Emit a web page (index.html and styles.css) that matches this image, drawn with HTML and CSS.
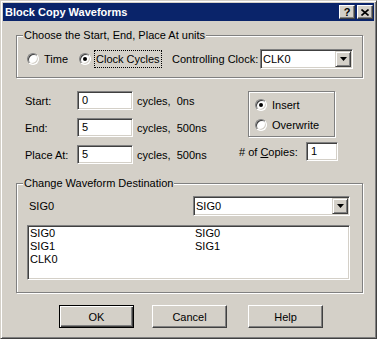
FILE: index.html
```html
<!DOCTYPE html>
<html lang="en">
<head>
  <meta charset="UTF-8">
  <title>Block Copy Waveforms</title>
  <link rel="stylesheet" href="styles.css">
</head>
<body>
  <div class="window">
    <div class="titlebar">
      <span class="title">Block Copy Waveforms</span>
      <div class="title-buttons">
        <span class="tbtn help">?</span>
        <span class="tbtn">
          <svg width="8" height="7" viewBox="0 0 8 7"><path d="M0.5 0.5 L7.5 6.5 M7.5 0.5 L0.5 6.5" stroke="#000" stroke-width="1.6"/></svg>
        </span>
      </div>
    </div>

    <div class="content">
      <fieldset class="group">
        <legend>Choose the Start, End, Place At units</legend>
        <div class="units-row">
          <div class="radio-item time-item"><span class="radio"></span><span class="radio-label">Time</span></div>
          <div class="radio-item clock-item"><span class="radio on"></span><span class="radio-label focus">Clock Cycles</span></div>
          <span class="clock-label">Controlling Clock:</span>
          <div class="combo clock-combo">
            <span class="combo-text">CLK0</span>
            <span class="drop"><svg width="7" height="4" viewBox="0 0 7 4"><polygon points="0,0 7,0 3.5,4" fill="#000"/></svg></span>
          </div>
        </div>
      </fieldset>

      <div class="range">
        <div class="fields">
          <span class="field-label">Start:</span>
          <div class="edit">0</div>
          <span class="note">cycles,  0ns</span>

          <span class="field-label">End:</span>
          <div class="edit">5</div>
          <span class="note">cycles,  500ns</span>

          <span class="field-label">Place At:</span>
          <div class="edit">5</div>
          <span class="note">cycles,  500ns</span>
        </div>

        <div class="side">
          <div class="mode-box">
            <div class="radio-item"><span class="radio on"></span><span class="radio-label">Insert</span></div>
            <div class="radio-item"><span class="radio"></span><span class="radio-label">Overwrite</span></div>
          </div>
          <div class="copies-row">
            <span># of <u>C</u>opies:</span>
            <div class="edit copies">1</div>
          </div>
        </div>
      </div>

      <fieldset class="group">
        <legend>Change Waveform Destination</legend>
        <div class="dest-inner">
          <div class="dest-row">
            <span class="dest-label">SIG0</span>
            <div class="combo dest-combo">
              <span class="combo-text">SIG0</span>
              <span class="drop"><svg width="7" height="4" viewBox="0 0 7 4"><polygon points="0,0 7,0 3.5,4" fill="#000"/></svg></span>
            </div>
          </div>
          <div class="listbox">
            <span>SIG0</span><span>SIG0</span>
            <span>SIG1</span><span>SIG1</span>
            <span>CLK0</span><span></span>
          </div>
        </div>
      </fieldset>

      <div class="buttons">
        <div class="btn default">OK</div>
        <div class="btn cancel">Cancel</div>
        <div class="btn help-btn">Help</div>
      </div>
    </div>
  </div>
</body>
</html>
```

FILE: styles.css
```css
* {
  box-sizing: border-box;
}

body {
  margin: 0;
  font-family: "Liberation Sans", Arial, sans-serif;
  font-size: 11px;
  color: #000;
  background-color: #d4d0c8;
}

.window {
  width: 377px;
  height: 339px;
  padding: 2px;
  background-color: #d4d0c8;
  border: 1px solid;
  border-color: #d4d0c8 #404040 #404040 #d4d0c8;
  box-shadow: inset 1px 1px 0 #fff, inset -1px -1px 0 #808080;
}

/* title bar */
.titlebar {
  height: 18px;
  display: flex;
  align-items: center;
  justify-content: space-between;
  padding: 0 1px 0 2px;
  background-color: #0a246a;
}

.title {
  color: #fff;
  font-weight: bold;
  font-size: 11px;
}

.title-buttons {
  display: flex;
  gap: 2px;
}

.tbtn {
  width: 16px;
  height: 14px;
  display: flex;
  align-items: center;
  justify-content: center;
  background-color: #d4d0c8;
  border: 1px solid;
  border-color: #fff #404040 #404040 #fff;
  box-shadow: inset -1px -1px 0 #808080;
  font-weight: bold;
  font-size: 11px;
  line-height: 12px;
}

.content {
  padding: 8px 11px 0 13px;
}

/* etched group boxes */
.group {
  margin: 0;
  padding: 0;
  min-width: 0;
  border: 1px solid #808080;
  box-shadow: 1px 1px 0 #fff, inset 1px 1px 0 #fff;
}

.group legend {
  margin-left: 6px;
  padding: 0 1px;
  line-height: 13px;
  background-color: #d4d0c8;
}

.units-row {
  height: 20px;
  margin: 7px 0 8px;
  padding-left: 10px;
  display: flex;
  align-items: center;
}

.radio-item {
  display: flex;
  align-items: center;
  height: 13px;
}

.radio {
  position: relative;
  flex: none;
  width: 12px;
  height: 12px;
  border-radius: 50%;
  background-color: #fff;
  border: 1px solid;
  border-color: #808080 #fff #fff #808080;
  box-shadow: inset 1px 1px 0 #404040, inset -1px -1px 0 #d4d0c8;
}

.radio.on::after {
  content: "";
  position: absolute;
  left: 3px;
  top: 3px;
  width: 4px;
  height: 4px;
  border-radius: 50%;
  background-color: #000;
}

.radio-label {
  margin-left: 5px;
}

.time-item {
  width: 52px;
}

.clock-item {
  width: 93px;
}

.clock-item .radio-label {
  margin-left: 3px;
  padding: 1px 1px;
  line-height: 14px;
  border: 1px dotted #000;
}

.clock-label {
  width: 88px;
}

/* combo boxes */
.combo {
  height: 20px;
  display: flex;
  align-items: center;
  justify-content: space-between;
  padding: 0 1px 0 2px;
  background-color: #fff;
  border: 1px solid;
  border-color: #808080 #fff #fff #808080;
  box-shadow: inset 1px 1px 0 #404040, inset -1px -1px 0 #d4d0c8;
}

.clock-combo {
  width: 93px;
}

.drop {
  width: 16px;
  height: 16px;
  display: flex;
  align-items: center;
  justify-content: center;
  background-color: #d4d0c8;
  border: 1px solid;
  border-color: #d4d0c8 #404040 #404040 #d4d0c8;
  box-shadow: inset 1px 1px 0 #fff, inset -1px -1px 0 #808080;
}

/* start / end / place at */
.range {
  display: flex;
  margin: 13px 0;
}

.fields {
  width: 223px;
  padding-left: 9px;
  display: grid;
  grid-template-columns: 52px 56px 1fr;
  grid-auto-rows: 19px;
  row-gap: 8px;
  align-items: center;
}

.edit {
  height: 19px;
  padding-left: 4px;
  line-height: 17px;
  background-color: #fff;
  border: 1px solid;
  border-color: #808080 #fff #fff #808080;
  box-shadow: inset 1px 1px 0 #404040, inset -1px -1px 0 #d4d0c8;
}

.note {
  margin-left: 4px;
  white-space: pre;
}

.side {
  width: 99px;
}

.mode-box {
  width: 87px;
  height: 46px;
  margin-left: 9px;
  padding: 6px 0 0 6px;
  display: flex;
  flex-direction: column;
  gap: 7px;
  border: 1px solid #808080;
  box-shadow: 1px 1px 0 #fff, inset 1px 1px 0 #fff;
}

.copies-row {
  height: 19px;
  margin-top: 5px;
  display: flex;
  align-items: center;
  justify-content: space-between;
}

.copies {
  width: 32px;
}

/* destination group */
.dest-inner {
  padding: 6px 12px 12px 10px;
}

.dest-row {
  display: flex;
  align-items: center;
  justify-content: space-between;
}

.dest-label {
  margin-left: 2px;
}

.dest-combo {
  width: 157px;
}

.listbox {
  height: 55px;
  margin-top: 9px;
  padding: 1px 2px;
  display: grid;
  grid-template-columns: 165px 1fr;
  grid-auto-rows: 13px;
  line-height: 13px;
  background-color: #fff;
  border: 1px solid;
  border-color: #808080 #fff #fff #808080;
  box-shadow: inset 1px 1px 0 #404040, inset -1px -1px 0 #d4d0c8;
}

/* dialog buttons */
.buttons {
  display: flex;
  margin-top: 12px;
  padding-left: 43px;
}

.btn {
  width: 75px;
  height: 23px;
  display: flex;
  align-items: center;
  justify-content: center;
  border: 1px solid;
  border-color: #fff #404040 #404040 #fff;
  box-shadow: inset -1px -1px 0 #808080;
}

.btn.default {
  border-color: #000;
  box-shadow: inset 1px 1px 0 #fff, inset -1px -1px 0 #404040, inset -2px -2px 0 #808080;
}

.cancel {
  margin-left: 18px;
}

.help-btn {
  margin-left: 21px;
}
```
